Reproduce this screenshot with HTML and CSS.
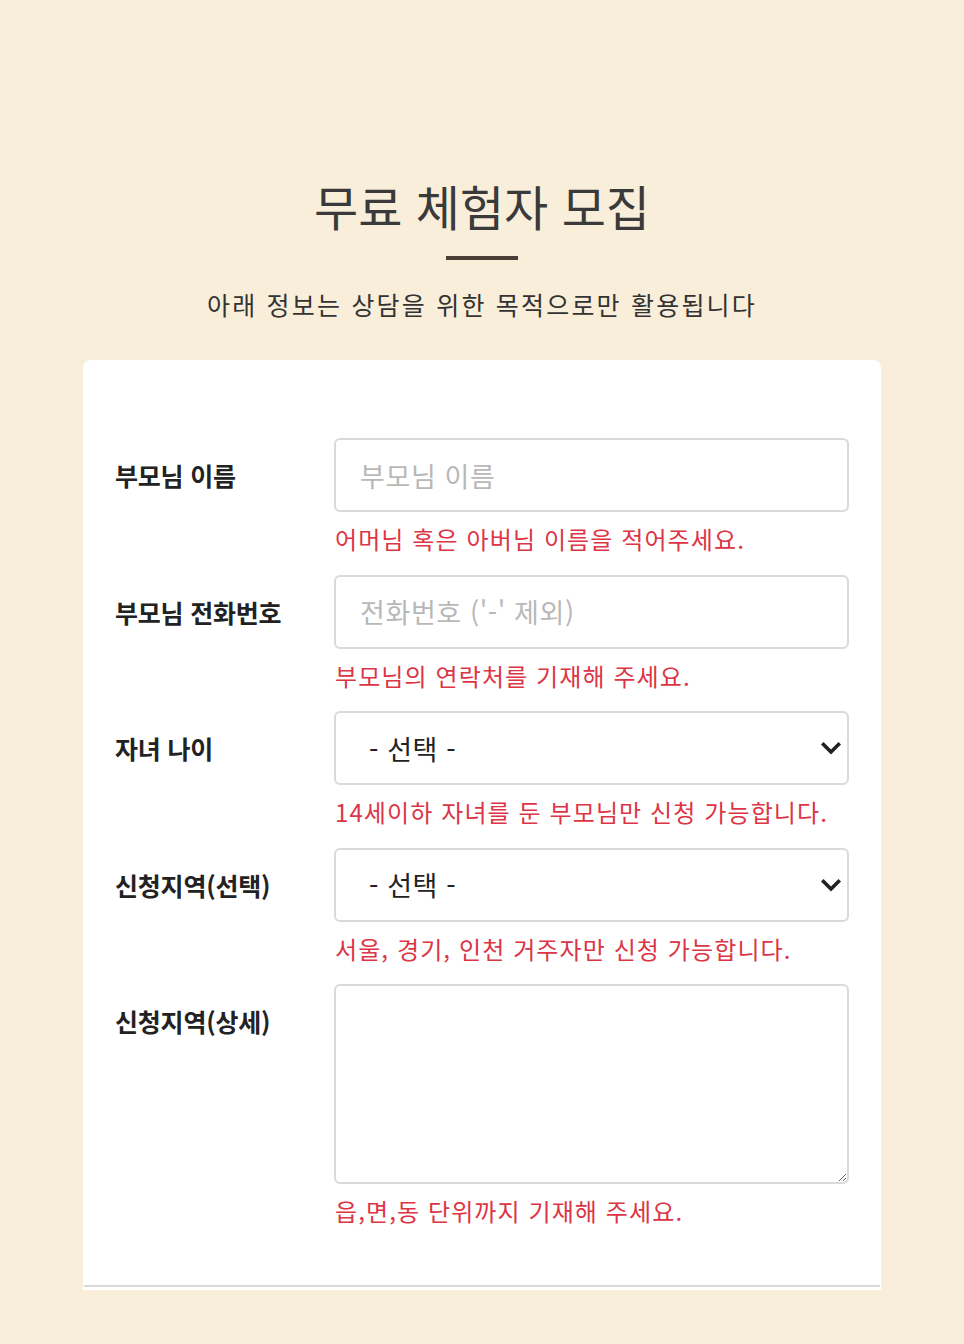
FILE: index.html
```html
<!DOCTYPE html>
<html lang="ko">
<head>
<meta charset="utf-8">
<title>무료 체험자 모집</title>
<link rel="stylesheet" href="styles.css">
</head>
<body>
<div class="page">
  <header class="header">
    <h1 class="title">무료 체험자 모집</h1>
    <div class="bar"></div>
    <p class="subtitle">아래 정보는 상담을 위한 목적으로만 활용됩니다</p>
  </header>
  <form class="card">
    <div class="row">
      <label class="label" for="pname">부모님 이름</label>
      <div class="field">
        <input class="control" id="pname" type="text" placeholder="부모님 이름">
        <div class="feedback">어머님 혹은 아버님 이름을 적어주세요.</div>
      </div>
    </div>
    <div class="row">
      <label class="label" for="phone">부모님 전화번호</label>
      <div class="field">
        <input class="control" id="phone" type="text" placeholder="전화번호 ('-' 제외)">
        <div class="feedback">부모님의 연락처를 기재해 주세요.</div>
      </div>
    </div>
    <div class="row">
      <label class="label" for="age">자녀 나이</label>
      <div class="field">
        <select class="control select" id="age"><option>- 선택 -</option></select>
        <div class="feedback">14세이하 자녀를 둔 부모님만 신청 가능합니다.</div>
      </div>
    </div>
    <div class="row">
      <label class="label" for="region">신청지역(선택)</label>
      <div class="field">
        <select class="control select" id="region"><option>- 선택 -</option></select>
        <div class="feedback">서울, 경기, 인천 거주자만 신청 가능합니다.</div>
      </div>
    </div>
    <div class="row">
      <label class="label" for="detail">신청지역(상세)</label>
      <div class="field">
        <textarea class="control area" id="detail"></textarea>
        <div class="feedback">읍,면,동 단위까지 기재해 주세요.</div>
      </div>
    </div>
    <div class="divider"></div>
  </form>
</div>
</body>
</html>
```
FILE: styles.css
```css
* { box-sizing: border-box; }
html, body { margin: 0; padding: 0; }
body {
  background: #f8eed9;
  font-family: "Noto Sans CJK KR", "Noto Sans", sans-serif;
  color: #333;
}
.page {
  width: 798px;
  margin: 0 auto;
  padding-top: 169px;
}
.header {
  display: flex;
  flex-direction: column;
  align-items: center;
}
.title {
  margin: 0;
  font-size: 48px;
  line-height: 72px;
  font-weight: 400;
  color: #3a3a3a;
}
.bar {
  width: 72px;
  height: 4px;
  background: #4a3f36;
  margin-top: 15px;
}
.subtitle {
  margin: 26px 0 0;
  font-size: 25px;
  line-height: 36px;
  letter-spacing: 2.2px;
  color: #333;
}
.card {
  margin-top: 38px;
  background: #fff;
  border-radius: 8px 8px 0 0;
  padding: 78px 32px 3px;
  display: flex;
  flex-direction: column;
  gap: 18px;
}
.row {
  display: flex;
}
.label {
  width: 219px;
  flex: none;
  font-size: 25px;
  line-height: 74px;
  font-weight: 700;
  letter-spacing: -0.2px;
  color: #222;
}
.field {
  flex: 1;
  display: flex;
  flex-direction: column;
}
.control {
  width: 100%;
  height: 74px;
  border: 2px solid #dadada;
  border-radius: 6px;
  background: #fff;
  font-family: inherit;
  font-size: 27px;
  letter-spacing: 0.6px;
  color: #222;
  padding: 0 24px;
  outline: none;
  margin: 0;
}
.control::placeholder { color: #b8b8b8; }
.select {
  appearance: none;
  -webkit-appearance: none;
  padding-left: 33px;
  background-image: url("data:image/svg+xml,%3Csvg xmlns='http://www.w3.org/2000/svg' width='20' height='14' viewBox='0 0 20 14'%3E%3Cpath d='M2.5 3.5l7.5 7.5 7.5-7.5' fill='none' stroke='%23222' stroke-width='3.6' stroke-linecap='square'/%3E%3C/svg%3E");
  background-repeat: no-repeat;
  background-position: right 6px center;
  background-size: 20px 14px;
}
.area {
  height: 200px;
  resize: vertical;
  padding: 12px 24px;
}
.feedback {
  margin-top: 10px;
  padding-left: 1px;
  font-size: 24px;
  line-height: 34.5px;
  letter-spacing: 1.1px;
  color: #dc3545;
}
.divider {
  margin-top: 38px;
  margin-left: -31px;
  margin-right: -31px;
  border-top: 2px solid #d6dadd;
}
```
